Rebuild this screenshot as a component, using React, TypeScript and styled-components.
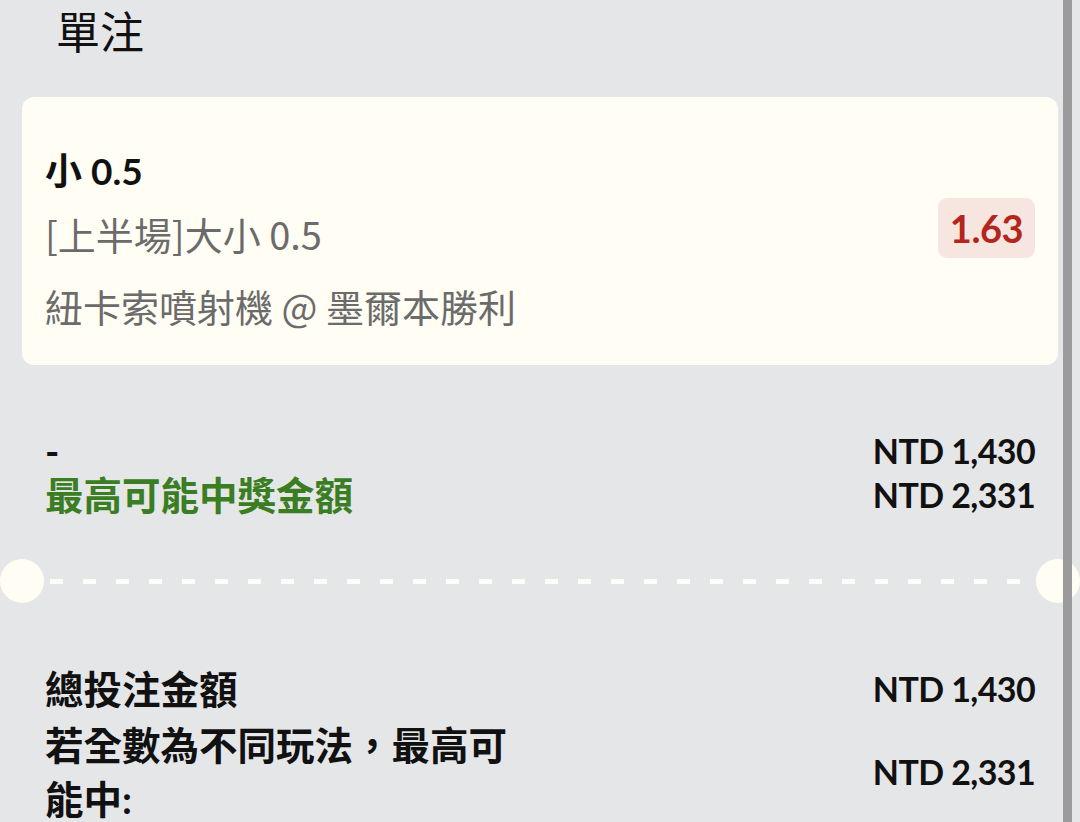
import React from "react";
import styled, { createGlobalStyle } from "styled-components";

const GlobalStyle = createGlobalStyle`
  html, body {
    margin: 0;
    padding: 0;
    background: #e5e6e8;
  }
  body {
    font-family: Lato, "Noto Sans CJK TC", "Noto Sans", sans-serif;
    color: #111111;
  }
  * { box-sizing: border-box; }
`;

const Page = styled.div`
  position: relative;
  width: 1080px;
  height: 822px;
  overflow: hidden;
  padding: 0 22px;
  background: #e5e6e8;
`;

const ScrollBar = styled.div`
  position: absolute;
  top: 0;
  right: 8px;
  width: 9px;
  height: 100%;
  background: #9b9b9d;
`;

const Header = styled.header`
  height: 97px;
  padding-left: 34px;
`;

const Title = styled.h1`
  margin: 0;
  font-size: 44px;
  font-weight: 400;
  line-height: 64px;
  color: #111111;
`;

const Card = styled.section`
  display: flex;
  align-items: center;
  justify-content: space-between;
  background: #fffdf4;
  border-radius: 12px;
  padding: 50px 23px 35px;
`;

const Info = styled.div`
  display: flex;
  flex-direction: column;
`;

const Selection = styled.div`
  font-size: 37px;
  font-weight: 700;
  line-height: 48px;
  color: #111111;
`;

const Detail = styled.div<{ $gap: number }>`
  margin-top: ${(p) => p.$gap}px;
  font-family: "Noto Sans CJK TC", "Noto Sans", sans-serif;
  font-size: 38px;
  font-weight: 400;
  line-height: 48px;
  color: #6b6b6b;
`;

const Odds = styled.div`
  margin-bottom: 22px;
  padding: 0 12px;
  height: 60px;
  display: flex;
  align-items: center;
  border-radius: 9px;
  background: #f7e6df;
  color: #b3261e;
  font-size: 38px;
  font-weight: 700;
  letter-spacing: -0.5px;
`;

const Summary = styled.div<{ $top: number; $gap: number }>`
  display: flex;
  flex-direction: column;
  gap: ${(p) => p.$gap}px;
  padding: ${(p) => p.$top}px 23px 0;
`;

const Row = styled.div<{ $lh: number }>`
  display: flex;
  align-items: center;
  justify-content: space-between;
  line-height: ${(p) => p.$lh}px;
`;

const Label = styled.div<{ $tone?: "green" | "plain" }>`
  max-width: 480px;
  font-size: 38.5px;
  font-weight: 700;
  color: ${(p) => (p.$tone === "green" ? "#3a7d22" : "#111111")};
`;

const Value = styled.div`
  font-size: 34px;
  font-weight: 700;
  letter-spacing: -0.6px;
  color: #111111;
  white-space: nowrap;
`;

const Divider = styled.div`
  display: flex;
  align-items: center;
  margin: 42px -22px 0;
  height: 44px;
`;

const Notch = styled.div`
  flex: 0 0 44px;
  height: 44px;
  border-radius: 50%;
  background: #fffdf4;
`;

const Dashes = styled.div`
  flex: 1;
  height: 5px;
  margin: 0 6px;
  background: repeating-linear-gradient(
    to right,
    #fdfdf9 0 13px,
    transparent 13px 33px
  );
`;

export default function App() {
  return (
    <>
      <GlobalStyle />
      <Page>
        <Header>
          <Title>單注</Title>
        </Header>
        <Card>
          <Info>
            <Selection>小 0.5</Selection>
            <Detail $gap={15}>[上半場]大小 0.5</Detail>
            <Detail $gap={24}>紐卡索噴射機 @ 墨爾本勝利</Detail>
          </Info>
          <Odds>1.63</Odds>
        </Card>
        <Summary $top={64} $gap={0}>
          <Row $lh={44}>
            <Label>-</Label>
            <Value>NTD 1,430</Value>
          </Row>
          <Row $lh={44}>
            <Label $tone="green">最高可能中獎金額</Label>
            <Value>NTD 2,331</Value>
          </Row>
        </Summary>
        <Divider>
          <Notch />
          <Dashes />
          <Notch />
        </Divider>
        <Summary $top={59} $gap={2}>
          <Row $lh={54}>
            <Label>總投注金額</Label>
            <Value>NTD 1,430</Value>
          </Row>
          <Row $lh={54}>
            <Label>若全數為不同玩法，最高可能中:</Label>
            <Value>NTD 2,331</Value>
          </Row>
        </Summary>
        <ScrollBar />
      </Page>
    </>
  );
}
